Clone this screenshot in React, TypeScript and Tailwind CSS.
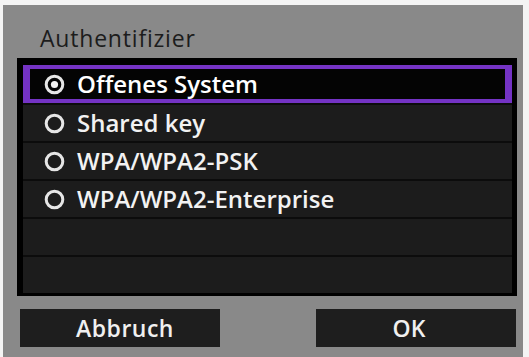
import React from "react";

const options = [
  "Offenes System",
  "Shared key",
  "WPA/WPA2-PSK",
  "WPA/WPA2-Enterprise",
  "",
  "",
];

function Radio({ checked }: { checked: boolean }) {
  return (
    <svg width="21" height="21" viewBox="0 0 21 21" className="shrink-0">
      <circle cx="10.5" cy="10.5" r="8.3" fill="none" stroke="#e6e6e6" strokeWidth="3" />
      {checked && <circle cx="10.5" cy="10.5" r="3.6" fill="#f2f2f2" />}
    </svg>
  );
}

export default function App() {
  return (
    <div className="w-[529px] h-[357px] bg-[#f4f4f4] pt-[5px] pl-[3px] pr-[6px] overflow-hidden">
      <div
        className="h-full bg-[#898989] flex flex-col"
        style={{ fontFamily: '"Open Sans", "Noto Sans", sans-serif' }}
      >
        <div className="h-[53px] pl-[37px] pt-[19px] text-[23px] leading-[28px] text-[#1c1c1c] tracking-[0.8px]">
          Authentifizier
        </div>

        <div className="ml-[14px] w-[500px] border-[3px] border-black bg-black pt-[4px] pl-[3px] pr-[2px]">
          {options.map((label, i) =>
            i === 0 ? (
              <div
                key={i}
                className="h-[38px] flex items-center gap-[12px] pl-[14px] border-y-[4px] border-x-[7px] border-[#7433c4] bg-[#040404] text-white text-[24px] font-semibold"
              >
                <Radio checked />
                <span className="leading-none">{label}</span>
              </div>
            ) : (
              <div
                key={i}
                className="h-[38px] flex items-center gap-[12px] pl-[21px] bg-[#1c1c1c] border-t-[2px] border-[#0c0c0c] text-[#f2f2f2] text-[24px] font-semibold"
              >
                {label && <Radio checked={false} />}
                <span className="leading-none">{label}</span>
              </div>
            )
          )}
        </div>

        <div className="mt-[13px] flex justify-between pl-[17px] pr-[7px]">
          <div className="w-[200px] h-[38px] bg-[#1e1e1e] flex items-center justify-center pl-[10px] text-[23px] font-semibold text-[#f0f0f0] tracking-[0.5px]">
            Abbruch
          </div>
          <div className="w-[200px] h-[38px] bg-[#1e1e1e] flex items-center justify-center pr-[14px] text-[23px] font-semibold text-[#f0f0f0]">
            OK
          </div>
        </div>
      </div>
    </div>
  );
}
